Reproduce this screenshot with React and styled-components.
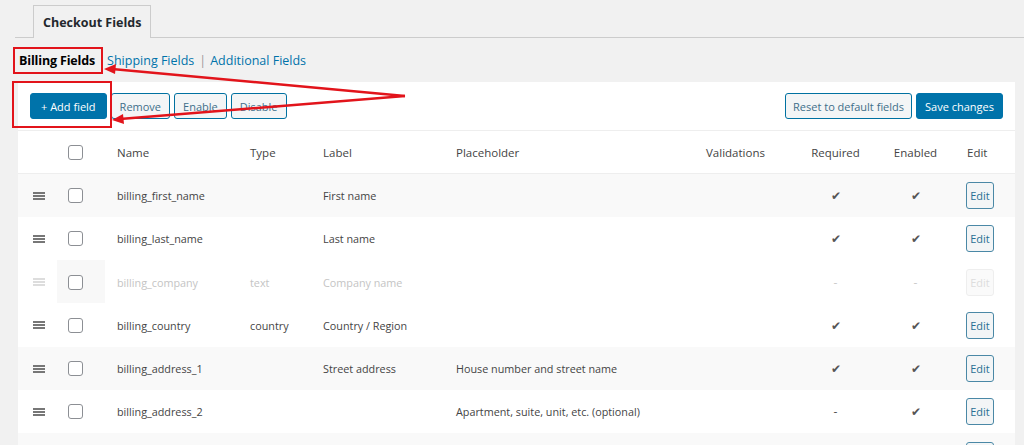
import React from 'react';
import styled, { createGlobalStyle, css } from 'styled-components';

const GlobalStyle = createGlobalStyle`
  html, body {
    margin: 0;
    padding: 0;
    background: #f1f1f1;
    font-family: "Open Sans", "Noto Sans", sans-serif;
    color: #444;
    overflow: hidden;
  }
`

const Page = styled.div`
  position: relative;
  width: 1024px;
  height: 445px;
  overflow: hidden;
`

const TabBar = styled.div`
  margin-left: 15px;
  padding: 5px 0 0 18px;
  border-bottom: 1px solid #ccc;
  display: flex;
  height: 32px;
`

const Tab = styled.div`
  padding: 0 9px;
  border: 1px solid #ccc;
  border-bottom: none;
  background: #f1f1f1;
  font-weight: 700;
  font-size: 12.5px;
  color: #23282d;
  display: flex;
  align-items: center;
  margin-bottom: -1px;
  height: 33px;
  box-sizing: border-box;
`

const SubNav = styled.div`
  display: flex;
  align-items: center;
  height: 44px;
  padding-left: 19px;
  font-size: 12.5px;
  gap: 3px;
`

const Current = styled.span`
  font-weight: 700;
  color: #000;
  letter-spacing: -0.15px;
  margin-right: 9px;
`

const NavLink = styled.a`
  color: #0073aa;
  text-decoration: none;
`

const Sep = styled.span`
  color: #999;
  margin: 0 1px 0 2px;
`

const Panel = styled.div`
  margin-left: 18px;
  width: 997px;
  background: #fff;
`

const Toolbar = styled.div`
  display: flex;
  align-items: center;
  height: 49px;
  padding: 0 12px;
  border-bottom: 1px solid #eee;
  box-sizing: border-box;
  gap: 4px;
`

const Spacer = styled.div`
  flex: 1;
`

const Button = styled.button`
  font-family: inherit;
  font-size: 11px;
  height: 26px;
  padding: 0 ${p => p.$pad || 8}px;
  border-radius: 3px;
  cursor: pointer;
  ${p => p.$primary ? css`
    background: #0073aa;
    border: 1px solid #0073aa;
    color: #fff;
  ` : css`
    background: #f3f5f6;
    border: 1px solid #0071a1;
    color: #3f6f8a;
  `}
`

const Table = styled.table`
  width: 997px;
  table-layout: fixed;
  border-collapse: collapse;
  font-size: 11.5px;
`

const Th = styled.th`
  font-weight: 400;
  height: 42px;
  padding: 0 0 0 12px;
  text-align: ${p => p.$center ? 'center' : 'left'};
  color: #444;
  border-bottom: 1px solid #eee;
  ${p => p.$center && css`padding: 0;`}
`

const Row = styled.tr`
  background: ${p => p.$alt ? '#f9f9f9' : '#fff'};
  color: ${p => p.$off ? '#c4c4c4' : '#444'};
  font-size: 10.8px;
`

const Td = styled.td`
  height: 43.25px;
  padding: 1px 0 0 12px;
  box-sizing: border-box;
  white-space: nowrap;
  overflow: hidden;
  text-align: ${p => p.$center ? 'center' : 'left'};
  ${p => p.$center && css`padding: 1px 0 0;`}
`

const HandleCell = styled.td`
  padding: 1px 0 0 15px;
`

const CheckCell = styled.td`
  padding: 1px 0 0 11px;
  background: ${p => p.$shade ? '#f8f8f8' : 'transparent'};
  border-bottom: ${p => p.$head ? '1px solid #eee' : 'none'};
`

const Box = styled.span`
  display: block;
  width: 13px;
  height: 13px;
  border: 1px solid #8c8f94;
  border-radius: 3px;
  background: #fff;
`

const Handle = styled.span`
  display: block;
  width: 12px;
  height: 8px;
  border-top: 2px solid ${p => p.$off ? '#ddd' : '#777'};
  border-bottom: 2px solid ${p => p.$off ? '#ddd' : '#777'};
  position: relative;
  box-sizing: border-box;
  &::after {
    content: '';
    position: absolute;
    left: 0;
    right: 0;
    top: 1px;
    height: 2px;
    background: ${p => p.$off ? '#ddd' : '#777'};
  }
`

const Mark = styled.span`
  color: ${p => p.$off ? '#ccc' : '#555'};
  font-size: 12px;
`

const EditBtn = styled.button`
  font-family: inherit;
  font-size: 11px;
  width: 28px;
  height: 27px;
  padding: 0;
  border-radius: 3px;
  background: ${p => p.$off ? '#fafafa' : '#f3f5f6'};
  border: 1px solid ${p => p.$off ? '#eee' : '#4a88a6'};
  color: ${p => p.$off ? '#ddd' : '#2a6f93'};
  margin-left: -1px;
`

const Overlay = styled.svg`
  position: absolute;
  left: 0;
  top: 0;
  pointer-events: none;
`

const cols = [39, 48, 133, 73, 133, 250, 101, 81, 79, 60]

const rows = [
  { name: 'billing_first_name', type: '', label: 'First name', ph: '', req: true, en: true },
  { name: 'billing_last_name', type: '', label: 'Last name', ph: '', req: true, en: true },
  { name: 'billing_company', type: 'text', label: 'Company name', ph: '', req: false, en: false, off: true },
  { name: 'billing_country', type: 'country', label: 'Country / Region', ph: '', req: true, en: true },
  { name: 'billing_address_1', type: '', label: 'Street address', ph: 'House number and street name', req: true, en: true },
  { name: 'billing_address_2', type: '', label: '', ph: 'Apartment, suite, unit, etc. (optional)', req: false, en: true },
  { name: 'billing_city', type: '', label: 'Town / City', ph: '', req: true, en: true },
]

function App() {
  return (
    <Page>
      <GlobalStyle />
      <TabBar>
        <Tab>Checkout Fields</Tab>
      </TabBar>
      <SubNav>
        <Current>Billing Fields</Current>
        <NavLink href="#">Shipping Fields</NavLink>
        <Sep>|</Sep>
        <NavLink href="#">Additional Fields</NavLink>
      </SubNav>
      <Panel>
        <Toolbar>
          <Button $primary $pad={10}>+ Add field</Button>
          <Button>Remove</Button>
          <Button>Enable</Button>
          <Button>Disable</Button>
          <Spacer />
          <Button $pad={7}>Reset to default fields</Button>
          <Button $primary $pad={8}>Save changes</Button>
        </Toolbar>
        <Table>
          <colgroup>
            {cols.map((w, i) => <col key={i} style={{ width: w }} />)}
          </colgroup>
          <thead>
            <tr>
              <Th />
              <CheckCell as="th" $head><Box /></CheckCell>
              <Th>Name</Th>
              <Th>Type</Th>
              <Th>Label</Th>
              <Th>Placeholder</Th>
              <Th>Validations</Th>
              <Th $center>Required</Th>
              <Th $center>Enabled</Th>
              <Th>Edit</Th>
            </tr>
          </thead>
          <tbody>
            {rows.map((r, i) => (
              <Row key={r.name} $alt={i % 2 === 0 && !r.off} $off={r.off}>
                <HandleCell><Handle $off={r.off} /></HandleCell>
                <CheckCell $shade={r.off}><Box /></CheckCell>
                <Td>{r.name}</Td>
                <Td>{r.type}</Td>
                <Td>{r.label}</Td>
                <Td>{r.ph}</Td>
                <Td />
                <Td $center><Mark $off={r.off}>{r.req ? '✔' : '-'}</Mark></Td>
                <Td $center><Mark $off={r.off}>{r.en ? '✔' : '-'}</Mark></Td>
                <Td><EditBtn $off={r.off}>Edit</EditBtn></Td>
              </Row>
            ))}
          </tbody>
        </Table>
      </Panel>
      <Overlay width="1024" height="445">
        <rect x="14" y="48" width="88" height="25" fill="none" stroke="#e2141b" strokeWidth="2" />
        <rect x="13" y="82" width="98" height="45" fill="none" stroke="#e2141b" strokeWidth="2" />
        <line x1="405" y1="96" x2="112" y2="69" stroke="#e2141b" strokeWidth="2.5" />
        <polygon points="104,69 116,64 115,74" fill="#e2141b" />
        <line x1="405" y1="96" x2="120" y2="119" stroke="#e2141b" strokeWidth="2.5" />
        <polygon points="112,120 123,114 124,124" fill="#e2141b" />
      </Overlay>
    </Page>
  )
}

export default App;
